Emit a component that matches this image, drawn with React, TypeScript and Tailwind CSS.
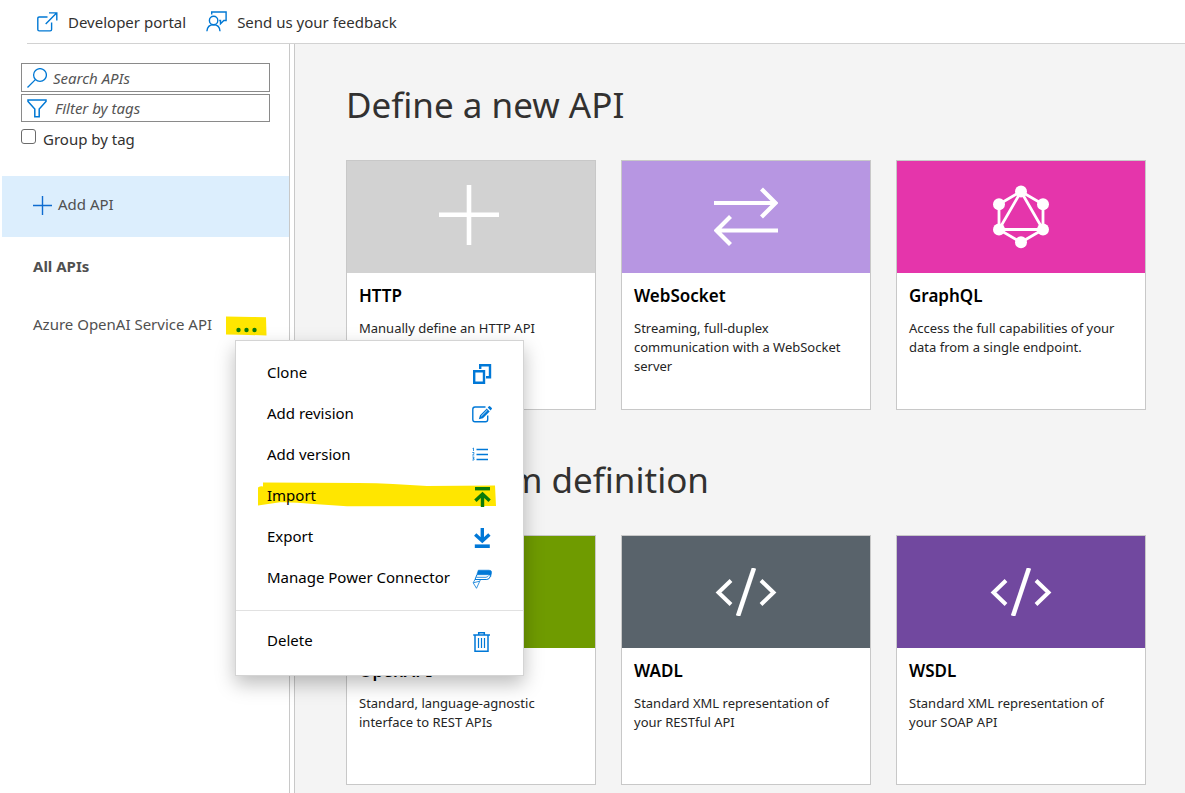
import type { ReactNode } from "react";

const PortalIcon = () => (
  <svg width="21" height="20" viewBox="0 0 21 20" fill="none" stroke="#0078d4" strokeWidth="1.4">
    <path d="M10.5 5H2.2Q.8 5 .8 6.400V17.500Q.8 18.900 2.200 18.900H13.200Q14.600 18.900 14.600 17.500V10.500" />
    <path d="M12 .9H19.800V8.600M19.600 1.100L8.700 12" />
  </svg>
);

const FeedbackIcon = () => (
  <svg width="21" height="21" viewBox="0 0 21 21" fill="none" stroke="#0078d4" strokeWidth="1.400">
    <path d="M5.700 3.500V1H20.100V9.500H17.800L14.500 12.800V9.500H13.200" />
    <circle cx="7.600" cy="9.500" r="4.200" />
    <path d="M.9 20.300C1.200 16 4 13.700 7.500 13.700S13.800 16 14 20.300" />
  </svg>
);

const SearchIcon = () => (
  <svg width="20" height="20" viewBox="0 0 20 20" fill="none" stroke="#0078d4" strokeWidth="1.300" className="shrink-0">
    <circle cx="13" cy="7" r="6.400" />
    <path d="M8.600 11.400L.5 19.500" />
  </svg>
);

const FilterIcon = () => (
  <svg width="20" height="19" viewBox="0 0 20 19" fill="none" stroke="#0078d4" strokeWidth="1.500" className="shrink-0">
    <path d="M1 1H19V2.400L12.200 10V17.800H7.800V10L1 2.400Z" />
  </svg>
);

const MenuSvg = ({ children }: { children: ReactNode }) => (
  <svg width="20" height="22" viewBox="0 0 20 22" fill="none" stroke="#0078d7" className="relative shrink-0">
    {children}
  </svg>
);

const cloneIcon = (
  <MenuSvg>
    <path strokeWidth="2.400" d="M8.200 7V3.200H18V15.200H14" />
    <path strokeWidth="2.400" d="M2.200 9.200H12V20.800H2.200Z" />
  </MenuSvg>
);
const editIcon = (
  <MenuSvg>
    <path strokeWidth="1.400" d="M13.500 4H3Q.8 4 .8 6.200V16.500Q.8 18.700 3 18.700H13.500Q15.700 18.700 15.700 16.500V12.500" />
    <path stroke="none" fill="#0078d7" d="M6.800 16.300L8 12.300L14.800 5.500L17.700 8.400L10.900 15.200ZM15.700 4.600L17 3.300Q17.500 2.900 18 3.300L19.800 5.100Q20.200 5.600 19.800 6.100L18.500 7.500Z" />
    <path stroke="#fff" strokeWidth=".8" d="M9.200 13.200L15.300 7.100" />
  </MenuSvg>
);
const listIcon = (
  <MenuSvg>
    <path strokeWidth="1.400" d="M4.500 5.500H16M4.500 10.500H16M4.500 15.500H16" />
    <path strokeWidth=".8" d="M.6 4.500L1.500 4V7M.3 8.500H2V9.700L.5 11H2.300M.3 13H2.200L1 14.500H2V16H.3" />
  </MenuSvg>
);
const importIcon = (
  <MenuSvg>
    <path stroke="#0b7a0b" strokeWidth="3.400" d="M3 3.700H18" />
    <path stroke="#0b7a0b" strokeWidth="3.400" d="M10.500 22V9M3.400 15.700L10.500 9L17.600 15.700" />
  </MenuSvg>
);
const exportIcon = (
  <MenuSvg>
    <path strokeWidth="3.600" d="M2.800 20.200H17.800" />
    <path strokeWidth="3.400" d="M10.300 2V15M3.200 8.500L10.300 15L17.400 8.500" />
  </MenuSvg>
);
const powerIcon = (
  <MenuSvg>
    <path fill="#0078d7" strokeWidth=".6" d="M6.300 3.200H17Q19.700 3.200 19.600 5.500L18.700 9.500Q18.500 7.700 16.500 7.700H4.800Z" />
    <path strokeWidth="1" d="M4.800 8L3 12.500H14.800Q17.500 12.500 18.500 9" />
    <path strokeWidth=".8" d="M4.300 10.300H14Q15.800 10.100 16.500 8.500M3 12.500L1.200 15.800L4.500 21.300L8.300 13M1.400 15.800L7.300 14.300" />
  </MenuSvg>
);
const trashIcon = (
  <MenuSvg>
    <path strokeWidth="1.500" d="M1.200 5H18M6.700 4.500V2.700H12.300V4.500M3 5V21.200H16V5" />
    <path strokeWidth="1.200" d="M6.500 8V18M9.500 8V18M12.500 8V18" />
  </MenuSvg>
);

const menuItems = [
  { label: "Clone", icon: cloneIcon },
  { label: "Add revision", icon: editIcon },
  { label: "Add version", icon: listIcon },
  { label: "Import", icon: importIcon, marked: true },
  { label: "Export", icon: exportIcon },
  { label: "Manage Power Connector", icon: powerIcon },
];

function MenuRow({ label, icon, marked }: { label: string; icon: ReactNode; marked?: boolean }) {
  return (
    <li>
      <button type="button" className="relative flex h-[41px] w-full items-center justify-between px-[31px] text-left text-black">
        {marked && (
          <svg className="absolute left-[21px] top-[6px]" width="240" height="26" viewBox="0 0 240 26" fill="#ffe600">
            <path d="M1 6.500Q4 4.500 6 5.500V1.500L101 2Q120 2 136 3L170 5L238 4.500L239 25L90 25.300L53 22.800Q40 21 23 21.200L1 24.500Z" />
          </svg>
        )}
        <span className="relative pb-[2px]">{label}</span>
        {icon}
      </button>
    </li>
  );
}

const CodeIcon = () => (
  <svg width="62" height="48" viewBox="0 0 62 48" fill="none" stroke="#fff" strokeWidth="4">
    <path d="M16 12.500L3.500 24.500L16 36.500M46 12.500L58.500 24.500L46 36.500" />
    <path d="M39 0L23 48" strokeWidth="4.500" />
  </svg>
);

const PlusIcon = () => (
  <svg width="60" height="60" viewBox="0 0 60 60" fill="none" stroke="#fff" strokeWidth="4.600" className="mr-1 mb-1">
    <path d="M0 29.800H60M30 0V60" />
  </svg>
);

const ArrowsIcon = () => (
  <svg width="64" height="60" viewBox="0 0 64 60" fill="none" stroke="#fff" strokeWidth="4.200">
    <path d="M0 16H61M47.500 2L61.500 16L47.500 30M64 43.500H3M16.500 29.500L2.500 43.500L16.500 57.500" />
  </svg>
);

const GraphIcon = () => (
  <svg width="56" height="64" viewBox="0 0 56 64" fill="#fff" stroke="#fff" strokeWidth="0">
    <path fill="none" strokeWidth="2.800" d="M28 6.500L50 19.200V44.500L28 57.300L6 44.500V19.200ZM28 6.500L50 44.500H6Z" />
    <circle cx="28" cy="6.500" r="6" />
    <circle cx="50" cy="19.200" r="6" />
    <circle cx="50" cy="44.500" r="6" />
    <circle cx="28" cy="57.300" r="6" />
    <circle cx="6" cy="44.500" r="6" />
    <circle cx="6" cy="19.200" r="6" />
  </svg>
);

function Card({ title, text, color, icon }: { title: string; text: string; color: string; icon: ReactNode }) {
  return (
    <article className="h-[250px] w-[250px] border border-[#c8c8c8] bg-white">
      <div className={`flex h-[112px] items-center justify-center pb-px ${color}`}>{icon}</div>
      <div className="px-[12px] pt-[12px]">
        <h2 className="text-[17px] leading-[22px] font-semibold text-black">{title}</h2>
        <p className="mt-[12px] text-[13px] leading-[19px] text-[#252525]">{text}</p>
      </div>
    </article>
  );
}

function Section({ title, children }: { title: string; children: ReactNode }) {
  return (
    <section className="mb-[39px]">
      <h1 className="mb-[24px] text-[35px] leading-[62px] text-[#323130]">{title}</h1>
      <div className="flex flex-wrap gap-[25px]">{children}</div>
    </section>
  );
}

export default function App() {
  return (
    <div className="flex h-screen flex-col overflow-hidden bg-white font-['Noto_Sans','Open_Sans',sans-serif] text-[15px] leading-[20px] text-[#323130]">
      <header className="ml-[27px] flex h-[44px] shrink-0 items-center gap-[20px] border-b border-[#d2d2d2] pl-[10px]">
        <a href="#portal" className="flex items-center gap-[10px]">
          <PortalIcon />
          Developer portal
        </a>
        <a href="#feedback" className="flex items-center gap-[10px]">
          <FeedbackIcon />
          Send us your feedback
        </a>
      </header>
      <div className="flex min-h-0 grow">
        <aside className="w-[290px] shrink-0 border-r border-[#c8c8c8]">
          <div className="px-[21px] pt-[19px]">
            <label className="flex h-[29px] w-[249px] items-center gap-[6px] border border-[#8a8a8a] pl-[5px]">
              <SearchIcon />
              <input type="text" aria-label="Search APIs" placeholder="Search APIs" className="w-full italic outline-none placeholder:text-[#555555]" />
            </label>
            <label className="mt-[2px] flex h-[28px] w-[249px] items-center gap-[8px] border border-[#8a8a8a] pl-[5px]">
              <FilterIcon />
              <input type="text" aria-label="Filter by tags" placeholder="Filter by tags" className="w-full italic outline-none placeholder:text-[#555555]" />
            </label>
            <label className="mt-[7px] flex items-start gap-[7px]">
              <input type="checkbox" className="h-[15px] w-[15px] appearance-none rounded-[3px] border border-[#6b6b6b] bg-white" />
              Group by tag
            </label>
          </div>
          <nav className="mt-[27px] text-[#505050]">
            <button type="button" className="ml-[2px] flex h-[61px] w-[287px] items-center gap-[6px] bg-[#dceefd] pb-[5px] pl-[31px]">
              <svg width="19" height="19" viewBox="0 0 19 19" stroke="#0f6cd0" strokeWidth="1.400" className="mt-[3px]">
                <path d="M0 9.500H19M9.500 0V19" />
              </svg>
              Add API
            </button>
            <a href="#all" className="mt-[19px] block pl-[33px] font-bold">
              All APIs
            </a>
            <div className="relative mt-[38px] pl-[33px]">
              <a href="#azure">Azure OpenAI Service API</a>
              <button type="button" aria-label="More actions" className="absolute left-[226px] top-[2px]">
                <svg width="41" height="20" viewBox="0 0 41 20">
                  <path fill="#ffe600" d="M0 .5L26 1L40 1.200L40.500 19.500L14 18.700L0 18.500Z" />
                  <g fill="#0b7a0b">
                    <circle cx="12.500" cy="14" r="2.200" />
                    <circle cx="20.500" cy="14" r="2.200" />
                    <circle cx="28.500" cy="14" r="2.200" />
                  </g>
                </svg>
              </button>
              <div className="absolute left-[235px] top-[26px] z-10 w-[289px] border border-[#d4d4d4] bg-white pt-[11px] pb-[14px] shadow-[0_8px_18px_0_rgba(0,0,0,0.26)]">
                <ul>
                  {menuItems.map((item) => (
                    <MenuRow key={item.label} {...item} />
                  ))}
                </ul>
                <ul className="mt-[12px] border-t border-[#e1e1e1] pt-[9px]">
                  <MenuRow label="Delete" icon={trashIcon} />
                </ul>
              </div>
            </div>
          </nav>
        </aside>
        <main className="ml-[4px] grow overflow-hidden border-l border-[#c8c8c8] bg-[#f4f4f4] pt-[30px] pl-[51px]">
          <Section title="Define a new API">
            <Card title="HTTP" text="Manually define an HTTP API" color="bg-[#d2d2d2]" icon={<PlusIcon />} />
            <Card title="WebSocket" text="Streaming, full-duplex communication with a WebSocket server" color="bg-[#b796e2]" icon={<ArrowsIcon />} />
            <Card title="GraphQL" text="Access the full capabilities of your data from a single endpoint." color="bg-[#e535ab]" icon={<GraphIcon />} />
          </Section>
          <Section title="Create from definition">
            <Card title="OpenAPI" text="Standard, language-agnostic interface to REST APIs" color="bg-[#6f9b00]" icon={<CodeIcon />} />
            <Card title="WADL" text="Standard XML representation of your RESTful API" color="bg-[#59636b]" icon={<CodeIcon />} />
            <Card title="WSDL" text="Standard XML representation of your SOAP API" color="bg-[#71489f]" icon={<CodeIcon />} />
          </Section>
        </main>
      </div>
    </div>
  );
}
